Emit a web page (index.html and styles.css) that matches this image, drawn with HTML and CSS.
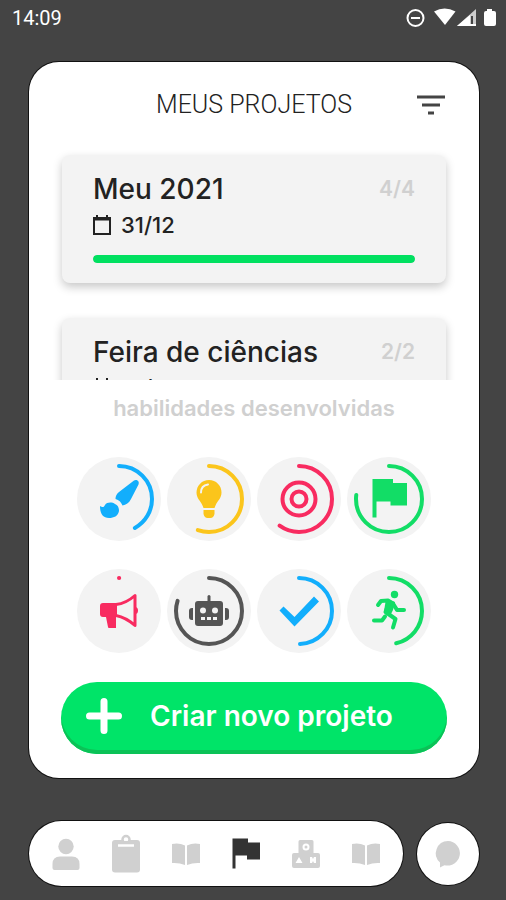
FILE: index.html
```html
<!DOCTYPE html>
<html lang="pt-BR">
<head>
<title>Meus projetos</title>
<meta charset="utf-8">
<meta name="viewport" content="width=device-width, initial-scale=1">
<link rel="stylesheet" href="styles.css">
</head>
<body>

<header class="status">
	<time>14:09</time>
	<svg class="status-icons" viewBox="0 0 92 20" aria-hidden="true">
		<g fill="none" stroke="#fff" stroke-width="2">
			<circle cx="9.500" cy="10" r="8"/>
			<path d="M5 10h9"/>
		</g>
		<path fill="#fff" d="M28 3.500q10.500-6 21.500 0L39 17z"/>
		<path fill="#ccc" d="M70 1v17H51z"/>
		<path fill="#444" d="M65 8h2v8h-2z"/>
		<path fill="#fff" d="M64 7v9h6v2H51z"/>
		<path fill="#fff" d="M81 1h5v2h2q2 0 2 2v11q0 2-2 2h-8q-2 0-2-2V5q0-2 2-2h1z"/>
	</svg>
</header>

<main class="panel">
	<div class="panel-head">
		<h1>MEUS PROJETOS</h1>
		<button class="filter" type="button" aria-label="Filtrar">
			<svg viewBox="0 0 28 20"><path d="M0 2h28M5 10h18M11 18h6"/></svg>
		</button>
	</div>

	<div class="projects">
		<article class="project">
			<div class="project-top">
				<h2>Meu 2021</h2>
				<span class="count">4/4</span>
			</div>
			<p class="date">
				<svg viewBox="0 0 18 20" aria-hidden="true"><path d="M1 3h16v16H1z"/><path d="M1 4.500h16M4 0v4M14 0v4"/></svg>
				31/12
			</p>
			<progress class="bar" value="4" max="4" aria-label="Progresso"></progress>
		</article>
		<article class="project">
			<div class="project-top">
				<h2>Feira de ciências</h2>
				<span class="count">2/2</span>
			</div>
			<p class="date">
				<svg viewBox="0 0 18 20" aria-hidden="true"><path d="M1 3h16v16H1z"/><path d="M1 4.500h16M4 0v4M14 0v4"/></svg>
				31/08
			</p>
			<progress class="bar" value="2" max="2" aria-label="Progresso"></progress>
		</article>
	</div>

	<h3>habilidades desenvolvidas</h3>

	<ul class="skills">
		<li class="skill blue">
			<svg viewBox="0 0 84 84" role="img" aria-label="Criatividade">
				<path class="ring" pathLength="100" stroke-dasharray="42 100" d="M42 9a33 33 0 0 1 0 66a33 33 0 0 1 0-66"/>
				<path d="M57 23.500c2-1.500 6 0 4.500 4L54 42c-2 4-5 6-8.500 6.500C44 45 42 43 38.500 42c0-3 1-5 3.500-7z"/>
				<path d="M23 49c3 2 4 1 5-1c2-3 7-3 10-1c3 1 4 4 4 7c-1 5-5 7-10 7c-6 0-9-4-9-12z"/>
			</svg>
		</li>
		<li class="skill yellow">
			<svg viewBox="0 0 84 84" role="img" aria-label="Ideias">
				<path class="ring" pathLength="100" stroke-dasharray="55.500 100" d="M42 9a33 33 0 0 1 0 66a33 33 0 0 1 0-66"/>
				<path d="M42 23c7 0 12.500 5.500 12.500 12.500c0 6-4 8-6 13l-1 2.500h-11l-1-2.500c-2-5-6-7-6-13C29.500 28.500 35 23 42 23z"/>
				<path d="M36.500 53h11v4q-1 4-4 4h-3q-3 0-4-4z"/>
				<path d="M34 35.500q0-7 7-8" fill="none" stroke="#f3f3f3" stroke-width="2" stroke-linecap="round"/>
			</svg>
		</li>
		<li class="skill red">
			<svg viewBox="0 0 84 84" role="img" aria-label="Foco">
				<path class="ring" pathLength="100" stroke-dasharray="60 100" d="M42 9a33 33 0 0 1 0 66a33 33 0 0 1 0-66"/>
				<circle class="line" cx="42" cy="42" r="16.500"/>
				<circle class="line" cx="42" cy="42" r="7.500"/>
			</svg>
		</li>
		<li class="skill green">
			<svg viewBox="0 0 84 84" role="img" aria-label="Metas">
				<path class="ring" pathLength="100" stroke-dasharray="77 100" d="M42 9a33 33 0 0 1 0 66a33 33 0 0 1 0-66"/>
				<path d="M25.500 22H46v4h14v22.500H43.500v-4h-14v16h-4z"/>
			</svg>
		</li>
		<li class="skill red">
			<svg viewBox="0 0 84 84" role="img" aria-label="Comunicação">
				<path class="ring" pathLength="100" stroke-dasharray="0.100 100" d="M42 9a33 33 0 0 1 0 66a33 33 0 0 1 0-66"/>
				<path d="M26 34h14v14h-1v11h-7q-1 0-1-1l-2-10h-3q-3 0-3-3v-8q0-3 3-3z"/>
				<path d="M39 35.500q10-1 19-9v30q-9-8-19-10" fill="none" stroke="currentColor" stroke-width="3" stroke-linejoin="round"/>
				<path d="M58 38q3 0 3 3.500t-3 3.500z"/>
			</svg>
		</li>
		<li class="skill grey">
			<svg viewBox="0 0 84 84" role="img" aria-label="Tecnologia">
				<path class="ring" pathLength="100" stroke-dasharray="80 100" d="M42 9a33 33 0 0 1 0 66a33 33 0 0 1 0-66"/>
				<rect x="28" y="32" width="28" height="25" rx="3"/>
				<rect x="40.500" y="26" width="3" height="8" rx="1.500"/>
				<path d="M26 39v12h-1q-3 0-3-3v-6q0-3 3-3zM58 39v12h1q3 0 3-3v-6q0-3-3-3z"/>
				<g fill="#f3f3f3">
					<circle cx="36" cy="41.500" r="3"/>
					<circle cx="48" cy="41.500" r="3"/>
					<path d="M34 48h4v3h-4zM40 48h4v3h-4zM46 48h4v3h-4z"/>
				</g>
			</svg>
		</li>
		<li class="skill blue">
			<svg viewBox="0 0 84 84" role="img" aria-label="Conclusão">
				<path class="ring" pathLength="100" stroke-dasharray="49.500 100" d="M42 9a33 33 0 0 1 0 66a33 33 0 0 1 0-66"/>
				<path d="M22.500 41.500l4-4L37.500 48 57 27.500l5 5L37.500 57.500z"/>
			</svg>
		</li>
		<li class="skill green">
			<svg viewBox="0 0 84 84" role="img" aria-label="Agilidade">
				<path class="ring" pathLength="100" stroke-dasharray="46.500 100" d="M42 9a33 33 0 0 1 0 66a33 33 0 0 1 0-66"/>
				<circle cx="47.500" cy="25.500" r="3.700"/>
				<path d="M39 30l9 3-2 8-2 4h-5l-2-3z"/>
				<path class="line" stroke-linecap="round" stroke-linejoin="round" d="M31 36l3-4 7-.500 5 3 4 6.500h7M42 34l-3.500 9 10 7L46 58.500M27 51.500h8l3-4"/>
			</svg>
		</li>
	</ul>

	<button class="create" type="button">
		<svg viewBox="0 0 36 36" aria-hidden="true"><path d="M18 3.500v29M3.500 18h29"/></svg>
		<span>Criar novo projeto</span>
	</button>
</main>

<footer class="footer">
	<nav class="tabs">
		<a href="#perfil" aria-label="Perfil">
			<svg viewBox="0 0 40 40"><circle cx="20" cy="12.500" r="7.700"/><path d="M14 22.500h12q7.500 0 7.500 7.500v4q0 2-2 2h-23q-2 0-2-2v-4q0-7.500 7.500-7.500z"/></svg>
		</a>
		<a href="#tarefas" aria-label="Tarefas">
			<svg viewBox="0 0 40 40"><rect x="6" y="6" width="28" height="32.500" rx="3"/><circle cx="20" cy="5.500" r="3.500" fill="#fff" stroke="#d0d0d0" stroke-width="2.500"/><path d="M15 7h10l2 5H13z"/><path d="M12 11.500h16" stroke="#fff" stroke-width="2.500"/></svg>
		</a>
		<a href="#diario" aria-label="Diário">
			<svg viewBox="0 0 40 40"><path d="M6 10q7-1.500 13 1.500V31q-6-2.500-13-2zM34 10q-7-1.500-13 1.500V31q6-2.500 13-2z"/></svg>
		</a>
		<a class="active" href="#projetos" aria-label="Projetos" aria-current="page">
			<svg viewBox="0 0 40 40"><path d="M6.500 4.500H22v4h12v17H21v-4H9.500v13h-3z"/></svg>
		</a>
		<a href="#jogos" aria-label="Jogos">
			<svg viewBox="0 0 40 40"><path d="M14 6h12q1.500 0 1.500 1.500V19H32q2 0 2 2v11q0 2-2 2H8q-2 0-2-2V21q0-2 2-2h4.500V7.500Q12.500 6 14 6z"/><circle cx="20" cy="13" r="2.500" fill="none" stroke="#fff" stroke-width="2"/><path d="M13 23l3.500 6h-7zM24 29v-6h2l1 2 1-2h2v6h-2l-1-2-1 2z" fill="#fff"/></svg>
		</a>
		<a href="#biblioteca" aria-label="Biblioteca">
			<svg viewBox="0 0 40 40"><path d="M6 10q7-1.500 13 1.500V31q-6-2.500-13-2zM34 10q-7-1.500-13 1.500V31q6-2.500 13-2z"/></svg>
		</a>
	</nav>
	<a class="chat" href="#chat" aria-label="Conversa">
		<svg viewBox="0 0 40 40"><path d="M20 7a12.300 12.300 0 1 1-3.500 24.200q-2 1-4.500 2.300v-5A12.300 12.300 0 0 1 20 7z"/></svg>
	</a>
</footer>

</body>
</html>
```

FILE: styles.css
```css
* {
	box-sizing: border-box;
}

body {
	display: flex;
	flex-direction: column;
	height: 100vh;
	min-height: 800px;
	margin: 0;
	padding: 0 27px 14px 29px;
	background: #444;
	color: #222;
	font-family: Inter, "Liberation Sans", sans-serif;
}

h1, h2, h3, p, ul {
	margin: 0;
	padding: 0;
}

ul {
	list-style: none;
}

svg {
	display: block;
	fill: currentColor;
}

button {
	border: 0;
	padding: 0;
	font: inherit;
	cursor: pointer;
}

/* STATUS BAR */
.status {
	display: flex;
	justify-content: space-between;
	align-items: center;
	height: 36px;
	margin: 0 -19px 26px -17px;
	color: #fff;
	font-family: Roboto, sans-serif;
	font-size: 20px;
}

.status-icons {
	width: 92px;
	height: 20px;
}

/* PANEL */
.panel {
	flex: 1;
	min-height: 0;
	display: flex;
	flex-direction: column;
	padding: 20px 32px 24px;
	border-radius: 30px;
	background: #fff;
	box-shadow: 0 0 0 1px #111;
}

.panel-head {
	display: grid;
	grid-template-columns: 28px 1fr 28px;
	align-items: center;
	height: 46px;
	flex: none;
	padding: 0 2px;
}

h1 {
	grid-column: 2;
	text-align: center;
	font-family: Roboto, sans-serif;
	font-size: 25px;
	font-weight: 300;
	line-height: 46px;
}

.filter {
	background: none;
}

.filter svg {
	width: 28px;
	height: 20px;
	stroke: #444;
	stroke-width: 3;
}

/* PROJECTS */
.projects {
	flex: 1;
	min-height: 0;
	display: flex;
	flex-direction: column;
	gap: 35px;
	margin: 0 -32px;
	padding: 27px 33px 0;
	overflow: hidden;
}

.project {
	flex: none;
	padding: 16px 31px 20px;
	border-radius: 8px;
	background: #f3f3f3;
	box-shadow: 0 4px 10px rgba(0, 0, 0, 0.22);
}

.project-top {
	display: flex;
	justify-content: space-between;
	line-height: 36px;
}

h2 {
	font-size: 28px;
	font-weight: 500;
}

.count {
	color: #d0d0d0;
	font-size: 21px;
	font-weight: 600;
}

.date {
	display: flex;
	align-items: center;
	gap: 10px;
	margin: 3px 0 15px;
	font-size: 22px;
	font-weight: 500;
	line-height: 30px;
}

.date svg {
	width: 18px;
	height: 20px;
	fill: none;
	stroke: #222;
	stroke-width: 2;
}

.bar {
	display: block;
	width: 100%;
	height: 8px;
	border: 0;
	border-radius: 4px;
	background: #ddd;
	overflow: hidden;
	appearance: none;
	-webkit-appearance: none;
}

.bar::-webkit-progress-bar {
	background: #ddd;
}

.bar::-webkit-progress-value {
	border-radius: 4px;
	background: #00e060;
}

/* SKILLS */
h3 {
	padding: 12px 0 33px;
	color: #d0d0d0;
	font-size: 22px;
	font-weight: 600;
	line-height: 32px;
	text-align: center;
}

.skills {
	display: grid;
	grid-template-columns: repeat(4, 84px);
	justify-content: center;
	gap: 28px 6px;
}

.skill {
	height: 84px;
	border-radius: 50%;
	background: #f3f3f3;
}

.ring {
	fill: none;
	stroke: currentColor;
	stroke-width: 4;
	stroke-linecap: round;
}

.line {
	fill: none;
	stroke: currentColor;
	stroke-width: 4;
}

.blue { color: #12aefc; }
.yellow { color: #fbc51b; }
.red { color: #f82b60; }
.green { color: #12dd66; }
.grey { color: #555; }

/* NEW PROJECT */
.create {
	display: flex;
	align-items: center;
	flex: none;
	height: 72px;
	margin-top: 29px;
	padding: 0 25px 4px;
	border-radius: 36px;
	background: #00e468;
	box-shadow: inset 0 -4px 0 #0bc257;
	color: #fff;
	font-size: 28px;
	font-weight: 600;
}

.create svg {
	width: 36px;
	height: 36px;
	stroke: #fff;
	stroke-width: 7;
	stroke-linecap: round;
}

.create span {
	flex: 1;
	padding-right: 1px;
	text-align: center;
}

/* FOOTER */
.footer {
	display: flex;
	align-items: center;
	gap: 14px;
	margin-top: 43px;
}

.tabs {
	flex: 1;
	display: flex;
	height: 65px;
	padding: 0 7px;
	align-items: center;
	border-radius: 33px;
	background: #fff;
	box-shadow: 0 0 0 1px #111;
}

.tabs a {
	flex: 1;
	color: #d0d0d0;
}

.tabs .active {
	color: #333;
}

.tabs svg, .chat svg {
	width: 40px;
	height: 40px;
	margin: 0 auto;
}

.chat {
	display: flex;
	align-items: center;
	width: 62px;
	height: 62px;
	border-radius: 50%;
	background: #fff;
	box-shadow: 0 0 0 1px #111;
	color: #d0d0d0;
}
```
